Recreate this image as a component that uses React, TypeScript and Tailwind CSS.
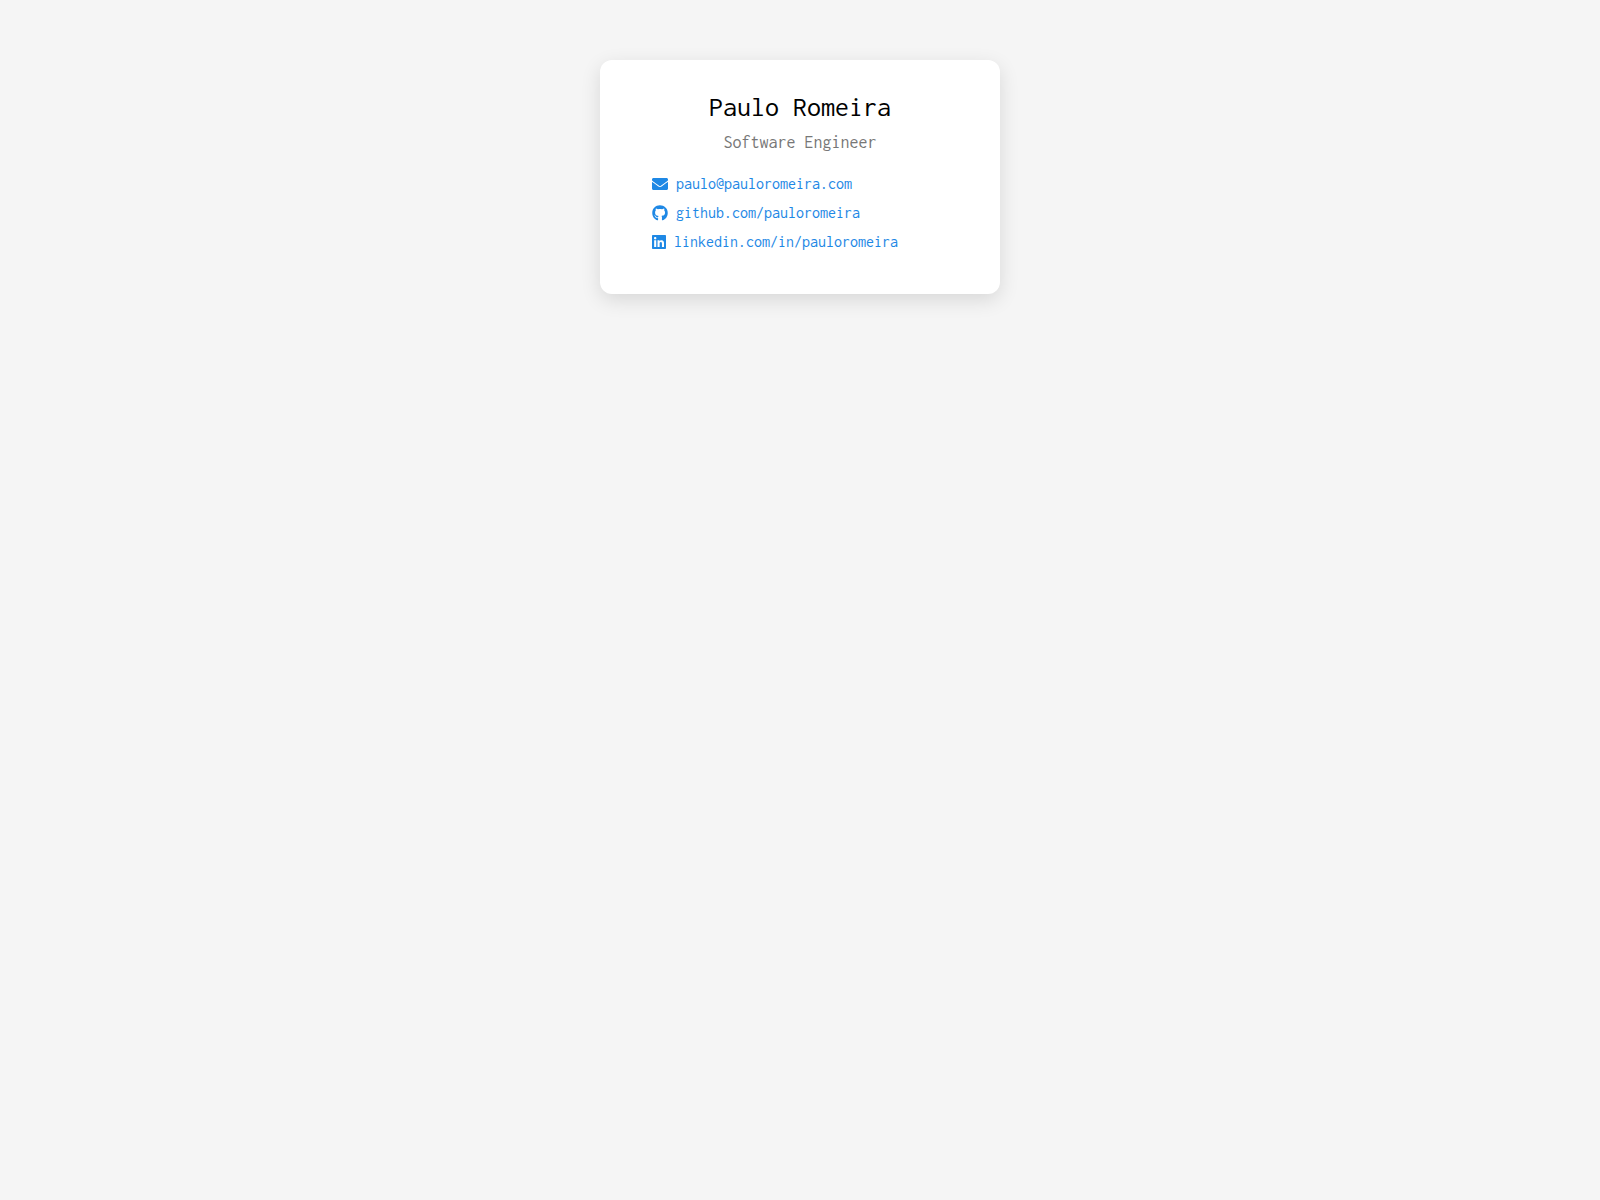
import { FaEnvelope, FaGithub, FaLinkedin } from 'react-icons/fa';

const links = [
  { href: 'mailto:paulo@pauloromeira.com', label: 'paulo@pauloromeira.com', Icon: FaEnvelope, width: 'w-4' },
  { href: 'https://github.com/pauloromeira', label: 'github.com/pauloromeira', Icon: FaGithub, width: 'w-4' },
  { href: 'https://linkedin.com/in/pauloromeira', label: 'linkedin.com/in/pauloromeira', Icon: FaLinkedin, width: 'w-3.5' },
];

export default function App() {
  return (
    <div className="min-h-screen bg-[#f5f5f5] px-4 py-15 font-['Inconsolata','Liberation_Mono',monospace]">
      <main className="mx-auto max-w-[400px] rounded-xl bg-white px-8 pt-8 pb-[42px] shadow-[0_6px_20px_rgba(0,0,0,0.12)]">
        <h1 className="text-center text-[28px] leading-[30px] text-black">Paulo Romeira</h1>
        <p className="mt-[9px] text-center text-[18px] leading-[22px] text-[#777777]">Software Engineer</p>

        <ul className="mt-5 space-y-2 px-5">
          {links.map(({ href, label, Icon, width }) => (
            <li key={href}>
              <a href={href} className="flex items-center gap-2 text-base leading-[21px] text-[#1e88e5]">
                <Icon className={`h-4 shrink-0 ${width}`} />
                <span>{label}</span>
              </a>
            </li>
          ))}
        </ul>
      </main>
    </div>
  );
}
